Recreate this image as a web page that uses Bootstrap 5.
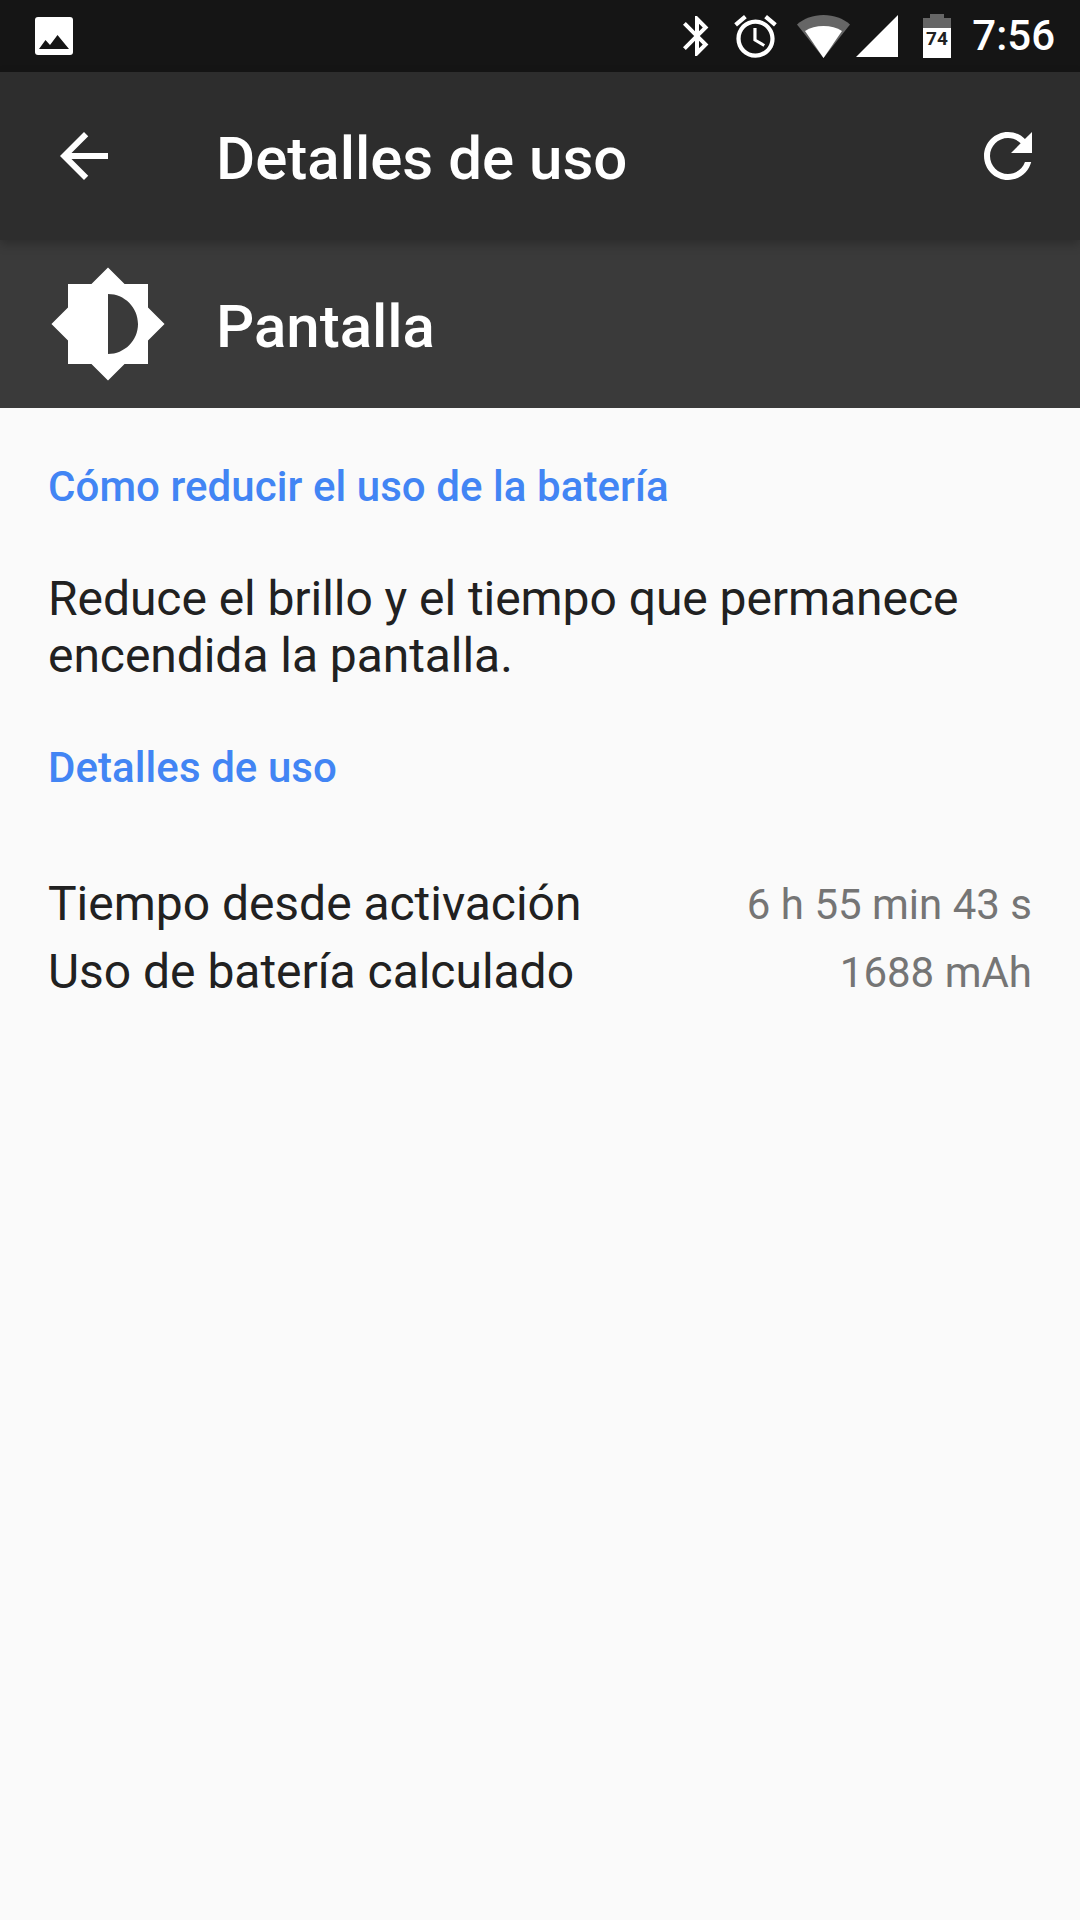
<!DOCTYPE html>
<html lang="es">

<head>
    <meta charset="UTF-8">
    <meta name="viewport" content="width=device-width, initial-scale=1.0">
    <title>Detalles de uso</title>
    <link href="https://cdn.jsdelivr.net/npm/bootstrap@5.3.2/dist/css/bootstrap.min.css" rel="stylesheet">
    <script src="https://cdn.jsdelivr.net/npm/bootstrap@5.3.2/dist/js/bootstrap.bundle.min.js"></script>
    <style>
        html, body { height: 100%; }
        body { background: #fafafa; font-family: Roboto, "Liberation Sans", sans-serif; color: #212121; }
        svg { display: block; fill: #fff; flex: none; }

        .status-bar { height: 72px; background: #151515; color: #fff; padding: 0 25px 0 35px; }
        .status-time { font-size: 42px; font-weight: 500; line-height: 1; margin-left: 21px; }
        .notif-icon { width: 38px; height: 38px; }
        .bt-icon { width: 48px; height: 48px; margin-right: 9px; }
        .alarm-icon { width: 51px; height: 51px; margin-right: 16px; }
        .wifi-icon { width: 53px; height: 43px; margin-right: 6px; }
        .signal-icon { width: 42px; height: 42px; margin-right: 25px; }
        .battery-icon { width: 28px; height: 44px; }
        .battery-text { font: 700 19px "Roboto", sans-serif; fill: #212121; }

        .app-bar { height: 168px; background: #2d2d2d; box-shadow: 0 4px 10px rgba(0, 0, 0, .25); position: relative; }
        .sub-bar { height: 168px; background: #3a3a3a; }
        .bar-icon { width: 72px; height: 72px; }
        .back-btn { margin-left: 48px; margin-right: 96px; }
        .refresh-btn { margin-right: 36px; }
        .sun-icon { width: 120px; height: 120px; margin-left: 48px; margin-right: 48px; }
        .bar-title { color: #fff; font-size: 60px; font-weight: 500; line-height: 1; margin: 0; padding-top: 5px; }
        .sub-title { color: #fff; font-size: 60px; font-weight: 500; line-height: 1; margin: 0; padding-top: 5px; }

        .content-area { padding: 0 48px; }
        .section-label { color: #4285f4; font-size: 42px; font-weight: 500; letter-spacing: .07px; line-height: 48px; margin: 0; }
        .label-first { padding-top: 55px; }
        .label-second { padding-top: 60px; }
        .tip-text { font-size: 48px; letter-spacing: -.06px; line-height: 57px; margin: 0; padding-top: 59px; }
        .stats-list { padding-top: 79px; }
        .stat-row { height: 68px; }
        .stat-name { font-size: 48px; letter-spacing: -.03px; line-height: 66px; }
        .stat-value { font-size: 42px; line-height: 68px; color: #757575; }
    </style>
</head>

<body>
    <!-- status bar -->
    <div class="status-bar d-flex align-items-center justify-content-between">
        <svg class="notif-icon" viewBox="0 0 38 38">
            <path d="M3 0h32a3 3 0 0 1 3 3v32a3 3 0 0 1-3 3H3a3 3 0 0 1-3-3V3a3 3 0 0 1 3-3z" />
            <path fill="#151515" d="M4 32l6.500-9 4.500 5 7.500-10L34 32z" />
        </svg>
        <div class="d-flex align-items-center">
            <svg class="bt-icon" viewBox="0 0 24 24">
                <path d="M17.71 7.71L12 2h-1v7.59L6.410 5 5 6.410 10.590 12 5 17.590 6.410 19 11 14.410V22h1l5.710-5.710-4.300-4.290 4.300-4.290zM13 5.830l1.880 1.880L13 9.590V5.830zm1.880 10.460L13 18.170v-3.760l1.880 1.880z" />
            </svg>
            <svg class="alarm-icon" viewBox="0 0 24 24">
                <path d="M22 5.720l-4.600-3.860-1.290 1.530 4.600 3.860L22 5.720zM7.880 3.390L6.600 1.860 2 5.710l1.290 1.530 4.590-3.850zM12.500 8H11v6l4.750 2.850.75-1.230-4-2.370V8zM12 4c-4.970 0-9 4.030-9 9s4.030 9 9 9 9-4.030 9-9-4.030-9-9-9zm0 16c-3.870 0-7-3.130-7-7s3.130-7 7-7 7 3.130 7 7-3.130 7-7 7z" />
            </svg>
            <svg class="wifi-icon" viewBox="0 0 53 43">
                <path fill-opacity=".35" d="M0 9.500C7 3.500 16 0 26.500 0S46 3.500 53 9.500L26.500 43z" />
                <path d="M8 16c5-3.500 11.500-5 18.500-5s13.500 1.500 18.500 5L26.500 43z" />
            </svg>
            <svg class="signal-icon" viewBox="0 0 42 42">
                <path d="M0 42L42 0v42z" />
            </svg>
            <svg class="battery-icon" viewBox="0 0 28 44">
                <path fill-opacity=".35" d="M7 0h14v4h7v10H0V4h7z" />
                <path d="M0 14h28v30H0z" />
                <text class="battery-text" x="14" y="31" text-anchor="middle">74</text>
            </svg>
            <span class="status-time">7:56</span>
        </div>
    </div>

    <!-- toolbar -->
    <div class="app-bar d-flex align-items-center">
        <svg class="bar-icon back-btn" viewBox="0 0 24 24">
            <path d="M20 11H7.830l5.590-5.590L12 4l-8 8 8 8 1.410-1.410L7.830 13H20v-2z" />
        </svg>
        <h1 class="bar-title flex-grow-1">Detalles de uso</h1>
        <svg class="bar-icon refresh-btn" viewBox="0 0 24 24">
            <path d="M17.650 6.350C16.200 4.900 14.210 4 12 4c-4.420 0-7.990 3.580-7.990 8s3.570 8 7.990 8c3.730 0 6.840-2.550 7.730-6h-2.080c-.82 2.330-3.040 4-5.650 4-3.310 0-6-2.690-6-6s2.690-6 6-6c1.660 0 3.140.69 4.220 1.780L13 11h7V4l-2.350 2.350z" />
        </svg>
    </div>

    <!-- app header -->
    <div class="sub-bar d-flex align-items-center">
        <svg class="sun-icon" viewBox="0 0 24 24">
            <path d="M20 15.310L23.310 12 20 8.690V4h-4.690L12 .69 8.690 4H4v4.690L.69 12 4 15.310V20h4.690L12 23.310 15.310 20H20v-4.690zM12 18V6c3.310 0 6 2.690 6 6s-2.690 6-6 6z" />
        </svg>
        <h2 class="sub-title">Pantalla</h2>
    </div>

    <div class="content-area">
        <p class="section-label label-first">Cómo reducir el uso de la batería</p>
        <p class="tip-text">Reduce el brillo y el tiempo que permanece encendida la pantalla.</p>
        <p class="section-label label-second">Detalles de uso</p>
        <div class="stats-list">
            <div class="stat-row d-flex justify-content-between">
                <span class="stat-name">Tiempo desde activación</span>
                <span class="stat-value">6 h 55 min 43 s</span>
            </div>
            <div class="stat-row d-flex justify-content-between">
                <span class="stat-name">Uso de batería calculado</span>
                <span class="stat-value">1688 mAh</span>
            </div>
        </div>
    </div>
</body>

</html>
